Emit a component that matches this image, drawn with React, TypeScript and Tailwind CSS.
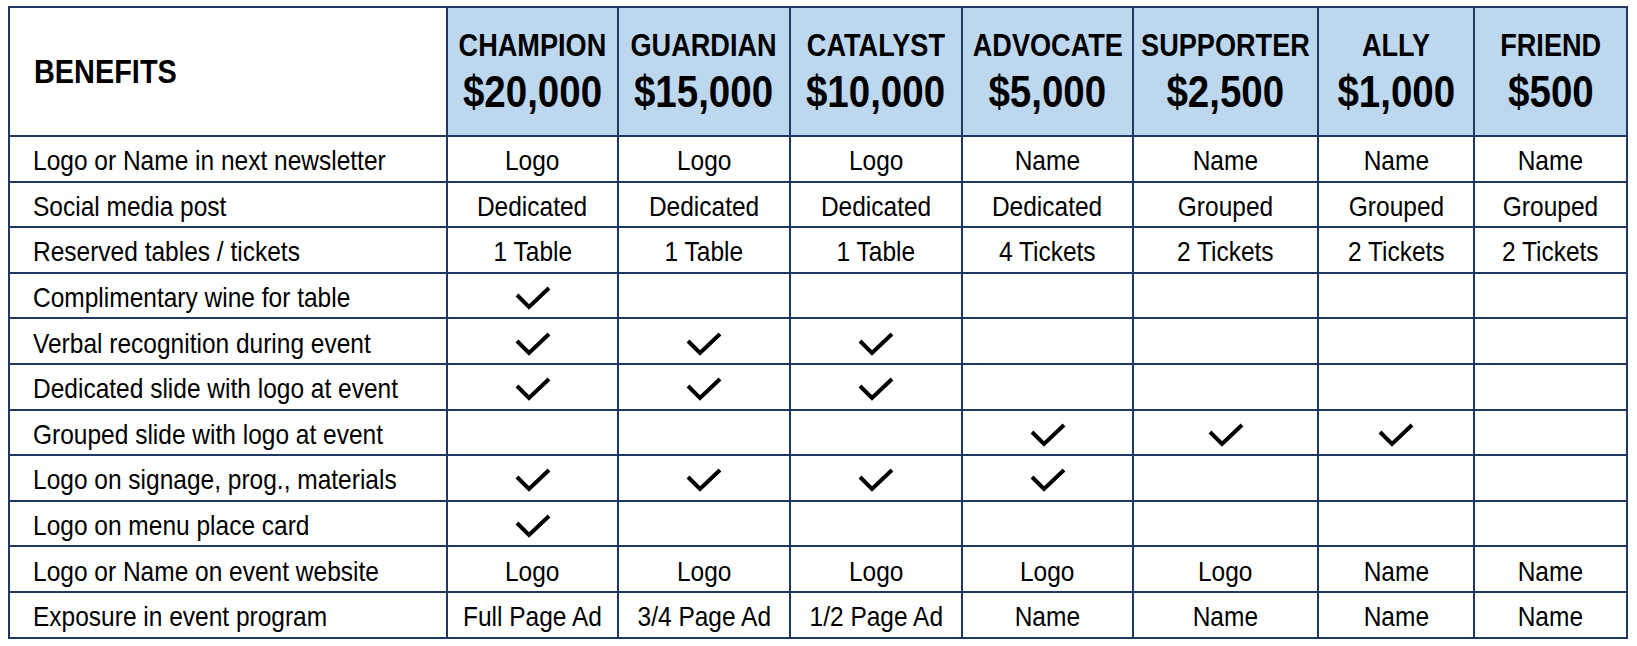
import React from 'react';

type Cell = string | boolean;

interface Tier {
  name: string;
  price: string;
}

const tiers: Tier[] = [
  { name: 'CHAMPION', price: '$20,000' },
  { name: 'GUARDIAN', price: '$15,000' },
  { name: 'CATALYST', price: '$10,000' },
  { name: 'ADVOCATE', price: '$5,000' },
  { name: 'SUPPORTER', price: '$2,500' },
  { name: 'ALLY', price: '$1,000' },
  { name: 'FRIEND', price: '$500' },
];

const rows: { label: string; cells: Cell[] }[] = [
  { label: 'Logo or Name in next newsletter', cells: ['Logo', 'Logo', 'Logo', 'Name', 'Name', 'Name', 'Name'] },
  { label: 'Social media post', cells: ['Dedicated', 'Dedicated', 'Dedicated', 'Dedicated', 'Grouped', 'Grouped', 'Grouped'] },
  { label: 'Reserved tables / tickets', cells: ['1 Table', '1 Table', '1 Table', '4 Tickets', '2 Tickets', '2 Tickets', '2 Tickets'] },
  { label: 'Complimentary wine for table', cells: [true, false, false, false, false, false, false] },
  { label: 'Verbal recognition during event', cells: [true, true, true, false, false, false, false] },
  { label: 'Dedicated slide with logo at event', cells: [true, true, true, false, false, false, false] },
  { label: 'Grouped slide with logo at event', cells: [false, false, false, true, true, true, false] },
  { label: 'Logo on signage, prog., materials', cells: [true, true, true, true, false, false, false] },
  { label: 'Logo on menu place card', cells: [true, false, false, false, false, false, false] },
  { label: 'Logo or Name on event website', cells: ['Logo', 'Logo', 'Logo', 'Logo', 'Logo', 'Name', 'Name'] },
  { label: 'Exposure in event program', cells: ['Full Page Ad', '3/4 Page Ad', '1/2 Page Ad', 'Name', 'Name', 'Name', 'Name'] },
];

// Narrow text: Arial Narrow isn't available, so squeeze Liberation Sans
function Narrow({ children, left = false }: { children: React.ReactNode; left?: boolean }) {
  return (
    <span
      className={`inline-block whitespace-nowrap scale-x-[0.875] ${left ? 'origin-left' : 'origin-center'}`}
    >
      {children}
    </span>
  );
}

function Check() {
  return (
    <svg width="36" height="24" viewBox="0 0 36 24" className="block">
      <polyline
        points="2,9 14,21 34,2"
        fill="none"
        stroke="#000"
        strokeWidth="4"
        strokeLinejoin="miter"
      />
    </svg>
  );
}

export default function App() {
  return (
    <div className="min-h-screen bg-white pl-[8px] pt-[6px] text-black [font-family:'Liberation_Sans',Arial,sans-serif]">
      <div className="grid w-[1620px] grid-cols-[436px_169px_170px_170px_169px_183px_154px_151px] grid-rows-[127px_repeat(11,43.6px)] gap-[2px] border-2 border-[#1f3864] bg-[#1f3864]">
        {/* Header */}
        <div className="flex items-center bg-white pl-[24px] text-[33px] font-bold leading-none">
          <Narrow left>BENEFITS</Narrow>
        </div>
        {tiers.map((tier) => (
          <div
            key={tier.name}
            className="flex flex-col items-center justify-center gap-[9px] bg-[#bdd7ee] font-bold leading-none"
          >
            <span className="text-[31px]">
              <Narrow>{tier.name}</Narrow>
            </span>
            <span className="text-[44px]">
              <Narrow>{tier.price}</Narrow>
            </span>
          </div>
        ))}

        {/* Benefit rows */}
        {rows.map((row) => (
          <React.Fragment key={row.label}>
            <div className="flex items-center bg-white pl-[23px] pt-[5px] text-[28px] leading-none">
              <Narrow left>{row.label}</Narrow>
            </div>
            {row.cells.map((cell, i) => (
              <div
                key={i}
                className="flex items-center justify-center bg-white pt-[5px] text-[28px] leading-none"
              >
                {cell === true ? <Check /> : cell === false ? null : <Narrow>{cell}</Narrow>}
              </div>
            ))}
          </React.Fragment>
        ))}
      </div>
    </div>
  );
}
